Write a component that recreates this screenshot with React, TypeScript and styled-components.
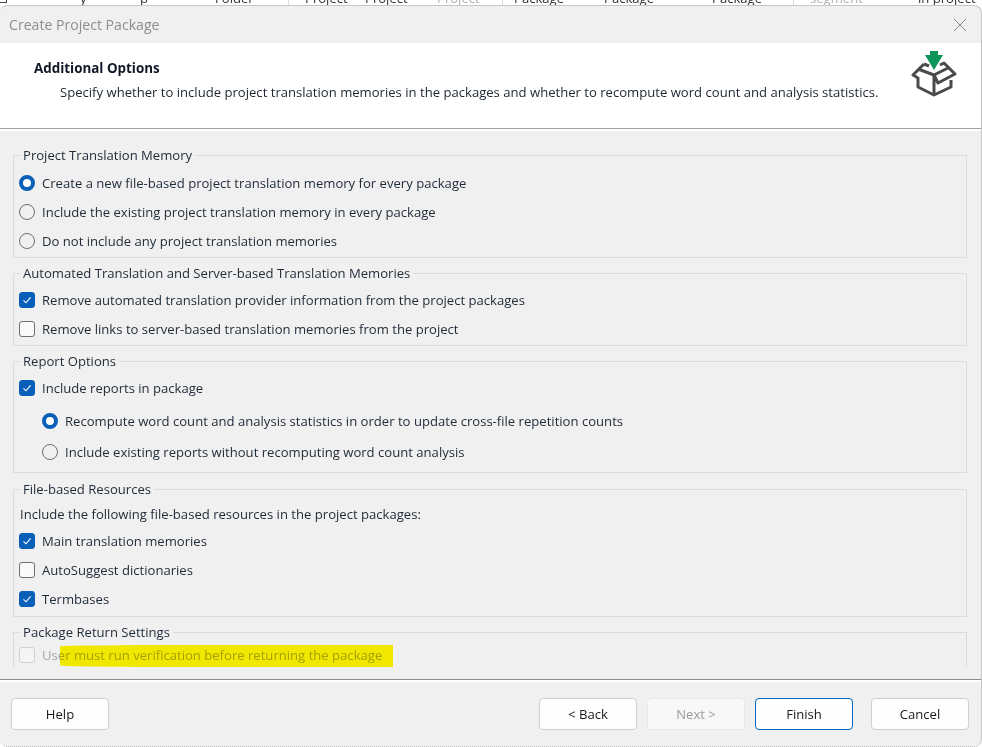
import styled, { createGlobalStyle } from "styled-components";

const Global = createGlobalStyle`
  html, body {
    margin: 0;
    padding: 0;
    background: #fff;
  }
  body {
    font-family: "Open Sans", "Noto Sans", sans-serif;
    font-size: 13.1px;
    color: #1a1a1a;
  }
`;

const Page = styled.div`
  width: 982px;
  height: 747px;
  overflow: hidden;
  background: #fff;
`;

const BehindStrip = styled.div`
  height: 5px;
  overflow: hidden;
  display: flex;
`;

const BehindCell = styled.div<{ $w: number; $muted?: boolean; $line?: boolean }>`
  width: ${(p) => p.$w}px;
  flex: none;
  height: 5px;
  white-space: nowrap;
  color: ${(p) => (p.$muted ? "#b0b0b0" : "#333")};
  border-right: ${(p) => (p.$line ? "1px solid #ddd" : "none")};
  box-sizing: border-box;
`;

const BehindLabel = styled.div`
  margin-top: -4px;
  line-height: 5px;
`;

const BehindBox = styled.div`
  width: 7px;
  height: 3px;
  flex: none;
  margin-right: -7px;
  box-sizing: border-box;
  border: 1px solid #444;
  border-top: none;
  border-left: none;
`;

const Dialog = styled.div`
  height: 742px;
  box-sizing: border-box;
  background: #f0f0f0;
  border: 1px solid #c6c6c6;
  border-bottom: 1px dotted #bdbdbd;
  border-left: none;
  border-radius: 8px;
  overflow: hidden;
  display: flex;
  flex-direction: column;
`;

const TitleBar = styled.div`
  height: 37px;
  flex: none;
  display: flex;
  align-items: center;
  justify-content: space-between;
  padding: 0 14px 0 9px;
  font-size: 14.1px;
  color: #8e8e8e;
`;

const CloseButton = styled.svg`
  width: 14px;
  height: 14px;
  display: block;
`;

const Banner = styled.div`
  height: 86px;
  flex: none;
  background: #fff;
  border-bottom: 1px solid #a0a0a0;
  box-shadow: 0 2px 0 #fff;
  display: flex;
  justify-content: space-between;
  padding: 16px 24px 0 34px;
  box-sizing: border-box;
  position: relative;
`;

const BannerText = styled.div`
  display: flex;
  flex-direction: column;
  gap: 6px;
`;

const BannerTitle = styled.div`
  font-weight: 700;
  font-size: 13.4px;
  line-height: 18px;
  color: #101828;
`;

const BannerSubtitle = styled.div`
  margin-left: 26px;
  line-height: 18px;
  color: #1c2530;
  white-space: nowrap;
`;

const BannerIcon = styled.svg`
  width: 46px;
  height: 48px;
  flex: none;
  display: block;
  margin-top: -9px;
`;

const Body = styled.div`
  height: 538px;
  flex: none;
  overflow: hidden;
  padding: 17px 14px 0 13px;
  box-sizing: border-box;
  display: flex;
  flex-direction: column;
  gap: 6px;
`;

const Group = styled.fieldset<{ $h: number; $pad: number; $pushed?: boolean }>`
  margin: ${(p) => (p.$pushed ? 1 : 0)}px 0 0;
  padding: ${(p) => p.$pad}px 0 0 5px;
  height: ${(p) => p.$h}px;
  min-width: 0;
  flex: none;
  box-sizing: border-box;
  border: 1px solid #dcdcdc;
  display: block;
`;

const GroupTitle = styled.legend`
  padding: 0 3px;
  margin-left: 1px;
  line-height: 18px;
  color: #1f2a37;
`;

const Row = styled.label<{ $h?: number; $indent?: boolean; $muted?: boolean }>`
  display: flex;
  align-items: center;
  gap: 7px;
  height: ${(p) => p.$h ?? 29}px;
  margin-left: ${(p) => (p.$indent ? 23 : 0)}px;
  color: ${(p) => (p.$muted ? "#a6a6a6" : "#1f2a37")};
  white-space: nowrap;
`;

const Radio = styled.span<{ $on?: boolean }>`
  width: 16px;
  height: 16px;
  flex: none;
  box-sizing: border-box;
  border-radius: 50%;
  background: ${(p) => (p.$on ? "#fff" : "transparent")};
  border: ${(p) => (p.$on ? "4.5px solid #0a5fb8" : "1px solid #6f6f6f")};
`;

const Check = styled.span<{ $on?: boolean; $muted?: boolean }>`
  width: 16px;
  height: 16px;
  flex: none;
  box-sizing: border-box;
  border-radius: 3px;
  display: flex;
  align-items: center;
  justify-content: center;
  background: ${(p) => (p.$on ? "#0a5fb8" : p.$muted ? "#f5f5f5" : "#fafafa")};
  border: 1px solid ${(p) => (p.$on ? "#0a5fb8" : p.$muted ? "#cfcfcf" : "#6f6f6f")};
`;

const Hint = styled.div`
  height: 21px;
  line-height: 18px;
  padding-left: 1px;
  color: #1f2a37;
  white-space: nowrap;
`;

const Marked = styled.span`
  position: relative;
`;

const Highlighter = styled.span`
  position: absolute;
  left: 18px;
  right: -11px;
  top: -1px;
  height: 22px;
  background: #fff700;
  mix-blend-mode: multiply;
  border-radius: 40% 0 0 30% / 6% 0 0 8%;
`;

const Footer = styled.div`
  flex: 1;
  display: flex;
  align-items: flex-start;
  border-top: 1px solid #8c8c8c;
  box-shadow: inset 0 2px 0 #fff;
  margin-top: 12px;
  padding: 18px 12px 0 11px;
  box-sizing: border-box;
`;

const Button = styled.button<{ $primary?: boolean; $gapLeft?: number }>`
  width: 98px;
  height: 32px;
  margin-left: ${(p) => p.$gapLeft ?? 0}px;
  box-sizing: border-box;
  padding: 0;
  font: inherit;
  color: #1a1a1a;
  background: #fefefe;
  border: 1px solid ${(p) => (p.$primary ? "#0067c0" : "#cfcfcf")};
  border-radius: 4px;
  &:disabled {
    color: #9a9a9a;
    background: #f8f8f8;
    border-color: #e8e8e8;
  }
`;

const Spacer = styled.div`
  flex: 1;
`;

const CheckMark = () => (
  <svg width="10" height="10" viewBox="0 0 10 10" fill="none">
    <path d="M1.5 5.4 L4 7.8 L8.6 2.4" stroke="#fff" strokeWidth="1.1" />
  </svg>
);

const behind = [
  { w: 80, t: "" },
  { w: 60, t: "y" },
  { w: 75, t: "p" },
  { w: 74, t: "Folder", line: true },
  { w: 16, t: "" },
  { w: 60, t: "Project" },
  { w: 72, t: "Project" },
  { w: 66, t: "Project", muted: true, line: true },
  { w: 11, t: "" },
  { w: 90, t: "Package" },
  { w: 108, t: "Package" },
  { w: 82, t: "Package", line: true },
  { w: 16, t: "" },
  { w: 108, t: "segment", muted: true },
  { w: 64, t: "in project" },
];

export default function App() {
  return (
    <Page>
      <Global />
      <BehindStrip>
        <BehindBox />
        {behind.map((c, i) => (
          <BehindCell key={i} $w={c.w} $muted={c.muted} $line={c.line}>
            <BehindLabel>{c.t}</BehindLabel>
          </BehindCell>
        ))}
      </BehindStrip>
      <Dialog>
        <TitleBar>
          <span>Create Project Package</span>
          <CloseButton viewBox="0 0 14 14" fill="none">
            <path d="M1 1 L13 13 M13 1 L1 13" stroke="#8a8a8a" strokeWidth="1" />
          </CloseButton>
        </TitleBar>
        <Banner>
          <BannerText>
            <BannerTitle>Additional Options</BannerTitle>
            <BannerSubtitle>
              Specify whether to include project translation memories in the packages and whether to recompute word count and analysis statistics.
            </BannerSubtitle>
          </BannerText>
          <BannerIcon viewBox="0 0 46 48" fill="none">
            <path d="M13 14 L2 25 L7 28 V37 L23 45 L40 37 V30" stroke="#4a4a4a" strokeWidth="3" strokeLinejoin="round" />
            <path d="M7 19 L23 25 V45 M13 14 L18 16 M23 25 L37 18 M29 15 L33 13 L44 24 L27 33 L23 25" stroke="#4a4a4a" strokeWidth="3" strokeLinejoin="round" />
            <path d="M19 1 H27 V5 H32 L23 20 L14 5 H19 Z" fill="#0f955a" />
          </BannerIcon>
        </Banner>
        <Body>
          <Group $h={112} $pad={4}>
            <GroupTitle>Project Translation Memory</GroupTitle>
            <Row><Radio $on />Create a new file-based project translation memory for every package</Row>
            <Row><Radio />Include the existing project translation memory in every package</Row>
            <Row><Radio />Do not include any project translation memories</Row>
          </Group>
          <Group $h={82} $pad={3}>
            <GroupTitle>Automated Translation and Server-based Translation Memories</GroupTitle>
            <Row><Check $on><CheckMark /></Check>Remove automated translation provider information from the project packages</Row>
            <Row><Check />Remove links to server-based translation memories from the project</Row>
          </Group>
          <Group $h={121} $pad={3}>
            <GroupTitle>Report Options</GroupTitle>
            <Row><Check $on><CheckMark /></Check>Include reports in package</Row>
            <Row $indent $h={37}><Radio $on />Recompute word count and analysis statistics in order to update cross-file repetition counts</Row>
            <Row $indent $h={25}><Radio />Include existing reports without recomputing word count analysis</Row>
          </Group>
          <Group $h={137} $pad={7} $pushed>
            <GroupTitle>File-based Resources</GroupTitle>
            <Hint>Include the following file-based resources in the project packages:</Hint>
            <Row><Check $on><CheckMark /></Check>Main translation memories</Row>
            <Row><Check />AutoSuggest dictionaries</Row>
            <Row><Check $on><CheckMark /></Check>Termbases</Row>
          </Group>
          <Group $h={60} $pad={2}>
            <GroupTitle>Package Return Settings</GroupTitle>
            <Row $muted $h={23}>
              <Check $muted />
              <Marked>
                User must run verification before returning the package
                <Highlighter />
              </Marked>
            </Row>
          </Group>
        </Body>
        <Footer>
          <Button>Help</Button>
          <Spacer />
          <Button>&lt; Back</Button>
          <Button disabled $gapLeft={10}>Next &gt;</Button>
          <Button $primary $gapLeft={10}>Finish</Button>
          <Button $gapLeft={18}>Cancel</Button>
        </Footer>
      </Dialog>
    </Page>
  );
}
